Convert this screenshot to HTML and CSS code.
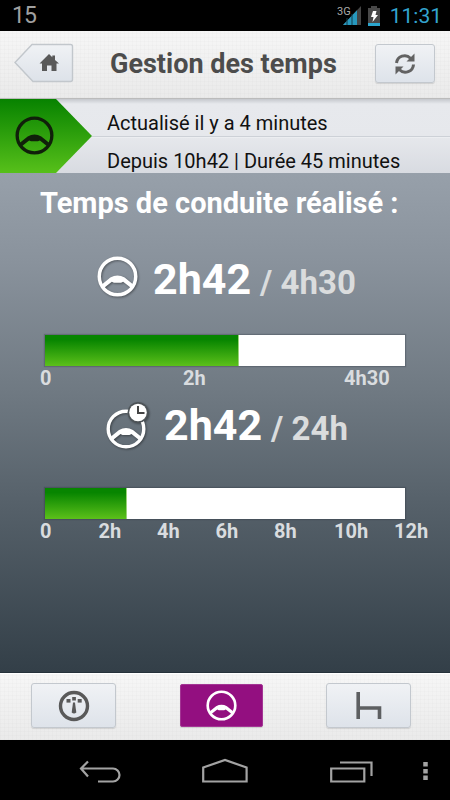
FILE: index.html
```html
<!DOCTYPE html>
<html lang="fr">
<head>
<meta charset="utf-8">
<title>Gestion des temps</title>
<link rel="stylesheet" href="styles.css">
</head>
<body>
<svg class="defs" width="0" height="0" aria-hidden="true">
  <symbol id="wheel" viewBox="0 0 40 40">
    <circle cx="20" cy="20" r="17.8" fill="none" stroke="currentColor" stroke-width="3.4"/>
    <path d="M5 27.5 L13 21 Q20 17.2 27 21 L35 27.5 L33 31 L25.5 25 L23.5 26 H16.500 L14.500 25 L7 31 Z" fill="currentColor"/>
  </symbol>
</svg>
<div class="phone">
  <div class="statusbar">
    <span class="count">15</span>
    <svg class="signal" width="24" height="21" viewBox="0 0 24 21">
      <path d="M6 20 L24 1 V20 Z" fill="#444"/>
      <path d="M6 20 L20 5.200 V20 Z" fill="#2797bd"/>
      <path d="M10 13V20M15 9V20" stroke="#123e4c" stroke-width="1"/>
      <text x="0" y="9.500" class="net">3G</text>
    </svg>
    <svg class="battery" width="12" height="20" viewBox="0 0 12 20">
      <path d="M3 0H9V2H12V20H0V2H3Z" fill="#484848"/>
      <path d="M0 17H12V20H0Z" fill="#2ba5cd"/>
      <path d="M5 5H8.500L7.500 9H10L4.500 16L5.500 11H3Z" fill="#fff"/>
    </svg>
    <span class="clock">11:31</span>
  </div>

  <div class="header">
    <svg class="home" width="60" height="41" viewBox="0 0 60 41">
      <defs><linearGradient id="btn" x1="0" y1="0" x2="0" y2="1"><stop offset="0" stop-color="#f0f2f5"/><stop offset="1" stop-color="#dde2e9"/></linearGradient></defs>
      <path d="M1 19.500 L18 1.500 H56.500 Q58.500 1.500 58.500 3.500 V36.500 Q58.500 38.500 56.500 38.500 H19 Z" fill="url(#btn)" stroke="#c2c7cc" stroke-width="1.400"/>
      <path d="M35 11 L38.300 14.300 V12.500 H41 V17 L45 20.600 H42.500 V28 H37.500 V22.500 H33 V28 H28 V20.600 H25.500 Z" fill="#595959"/>
    </svg>
    <h1 class="title">Gestion des temps</h1>
    <div class="button refresh">
      <svg width="24" height="24" viewBox="0 0 24 24" fill="none" stroke="#626262" stroke-width="3">
        <path d="M3.500 11 A8.200 8.200 0 0 1 17.500 6.200"/>
        <path d="M20.500 12.500 A8.200 8.200 0 0 1 6.500 17.800"/>
        <path d="M21.500 1.500V9.500H13.500ZM2.500 22.500V14.500H10.500Z" fill="#626262" stroke="none"/>
      </svg>
    </div>
  </div>

  <div class="info">
    <div class="arrow"><svg width="39" height="39"><use href="#wheel"/></svg></div>
    <div class="lines">
      <div class="line"><span class="updated">Actualisé il y a 4 minutes</span></div>
      <div class="line"><span class="since">Depuis 10h42 | Durée 45 minutes</span></div>
    </div>
  </div>

  <div class="main">
    <h2 class="heading">Temps de conduite réalisé :</h2>
    <div class="reading first">
      <svg class="icon" width="41" height="41"><use href="#wheel"/></svg>
      <span class="value">2h42</span><span class="limit">/ 4h30</span>
    </div>
    <div class="bar"><div class="fill" style="width:53.8%"></div></div>
    <div class="scale short"><span>0</span><span>2h</span><span>4h30</span></div>
    <div class="reading second">
      <svg class="icon" width="44" height="48" viewBox="0 0 44 48">
        <use href="#wheel" x="1" y="7" width="40" height="40"/>
        <circle cx="33" cy="10.500" r="10.500" fill="#4d5357"/>
        <circle cx="33" cy="10.500" r="8.800" fill="#fff"/>
        <path d="M33 4V11H39.500" fill="none" stroke="#444" stroke-width="2"/>
      </svg>
      <span class="value">2h42</span><span class="limit">/ 24h</span>
    </div>
    <div class="bar"><div class="fill" style="width:22.8%"></div></div>
    <div class="scale long"><span>0</span><span>2h</span><span>4h</span><span>6h</span><span>8h</span><span>10h</span><span>12h</span></div>
  </div>

  <div class="tabs">
    <div class="button">
      <svg width="32" height="32" viewBox="0 0 32 32" fill="#595959">
        <circle cx="16" cy="16" r="13.500" fill="none" stroke="#595959" stroke-width="3.400"/>
        <path d="M15 12.500H17L18.300 22.500Q16 24.500 13.700 22.500Z"/>
        <rect x="8.500" y="9" width="4" height="3.600"/><rect x="14.200" y="7" width="3.700" height="3.500"/><rect x="19.700" y="9" width="4" height="3.600"/>
      </svg>
    </div>
    <div class="button active"><svg width="31" height="31"><use href="#wheel"/></svg></div>
    <div class="button">
      <svg width="26" height="28" viewBox="0 0 26 28" fill="none" stroke="#5d5f61" stroke-width="4"><path d="M2.200 0V27M2.200 16H23.500V27" stroke-width="3.600"/></svg>
    </div>
  </div>

  <div class="navbar">
    <svg width="450" height="60" viewBox="0 0 450 60" fill="none" stroke="#a3a3a3" stroke-width="2.200">
      <path d="M98 61.500H113A6.500 6.500 0 0 0 113 48.500H81M88 41.500L81 48.500L88 56.500" transform="translate(0 -20)"/>
      <path d="M203.200 41.500V27.500L225 20L246.600 27.500V41.500Z"/>
      <path d="M331.200 28.500H364.300V41.500H331.200ZM340 22.500H371.500V36"/>
      <path d="M425.500 22V26.500M425.500 29V33.500M425.500 35.500V40" stroke-width="4.500"/>
    </svg>
  </div>
</div>
</body>
</html>
```
FILE: styles.css
```css
* { box-sizing: border-box; }
body { margin: 0; background: #000; font-family: Roboto, "Liberation Sans", sans-serif; }
svg { display: block; flex: none; }
.defs { position: absolute; }
.phone { width: 450px; height: 800px; display: flex; flex-direction: column; overflow: hidden; white-space: nowrap; }

.statusbar { height: 31px; flex: none; background: #000; display: flex; align-items: center; padding: 0 8px 0 12px; }
.count { color: #a0a0a0; font-size: 23px; letter-spacing: -1px; }
.signal { margin-left: auto; margin-top: -1px; }
.net { font-size: 11px; fill: #aaa; }
.battery { margin: 0 10px 0 7px; }
.clock { color: #33a5d0; font-size: 21px; line-height: 31px; padding-top: 1px; }

.header, .tabs {
  flex: none;
  background-color: #f0f0f0;
  background-image:
    repeating-linear-gradient(90deg, rgba(0,0,0,.012) 0 1px, transparent 1px 4px),
    repeating-linear-gradient(0deg, rgba(0,0,0,.012) 0 1px, transparent 1px 4px),
    linear-gradient(#f6f6f6, #eaeaea);
}
.header { height: 68px; display: flex; align-items: center; padding: 0 15px 2px 14px; border-bottom: 1px solid #bbb; }
.title { margin: 0 0 0 36px; font-size: 27px; font-weight: 700; color: #4c4c4c; line-height: 40px; }
.button { display: flex; align-items: center; justify-content: center; border: 1px solid #c3c8ce; border-radius: 3px; background: linear-gradient(#f0f2f5, #dee3ea); box-shadow: 0 1px 1px rgba(0,0,0,.12); }
.refresh { width: 60px; height: 39px; margin-left: auto; }

.info { height: 74px; flex: none; display: flex; background: linear-gradient(#c5c8cd, #e7e9ed 5px, #e6e8ec 38px, #d8dbe1); }
.arrow { width: 92px; height: 74px; padding: 17px 0 0 15px; color: #10200a; background: linear-gradient(#078200, #57c01a); clip-path: polygon(0 0, 56px 0, 100% 37px, 56px 100%, 0 100%); }
.lines { flex: 1; }
.line { height: 37px; padding-left: 15px; color: #111; font-size: 20px; line-height: 48px; }
.line + .line { border-top: 1px solid #cdd1d7; box-shadow: inset 0 1px #eceef1; line-height: 49px; }

.main { height: 500px; flex: none; padding: 10px 45px 0; background: linear-gradient(#97a0aa, #89929c 90px, #6f7982 220px, #56616a 330px, #333f48); border-bottom: 1px solid #25313a; }
.heading { margin: 0 0 0 -5px; font-size: 29px; line-height: 40px; font-weight: 700; color: #fff; }
.reading { display: flex; align-items: baseline; font-weight: 700; color: #fff; }
.reading .icon { align-self: flex-start; filter: drop-shadow(1px 1px 1px rgba(0,0,0,.4)); }
.first { height: 112px; padding: 33px 0 0 52px; }
.second { height: 99px; padding: 13px 0 0 60px; }
.value { font-size: 43px; line-height: 46px; margin-left: 15px; }
.limit { font-size: 33px; line-height: 40px; margin-left: 9px; color: #dadcdd; }
.bar { width: 360px; height: 31px; background: #fff; box-shadow: 0 0 1px 1px rgba(30,40,50,.25); }
.fill { height: 100%; background: linear-gradient(#078500 15%, #5cc01a); border-right: 1px solid #9ad378; }
.scale { display: flex; height: 23px; margin-left: -5px; font-size: 20px; line-height: 25px; font-weight: 700; color: #d9dcdf; }
.scale span { width: 58.500px; flex: none; }
.short span:nth-child(1) { width: 143px; }
.short span:nth-child(2) { width: 161px; }
.long span:nth-child(n+5) { width: 60px; }

.tabs { height: 67px; display: flex; justify-content: space-between; padding: 9px 39px 0 31px; border-top: 1px solid #fff; }
.tabs .button { width: 85px; height: 45px; }
.tabs .active { width: 83px; height: 43px; margin-top: 1px; color: #fff; background: #930f80; border-color: #a33594; border-radius: 2px; }
.navbar { height: 60px; flex: none; background: #000; }
```
